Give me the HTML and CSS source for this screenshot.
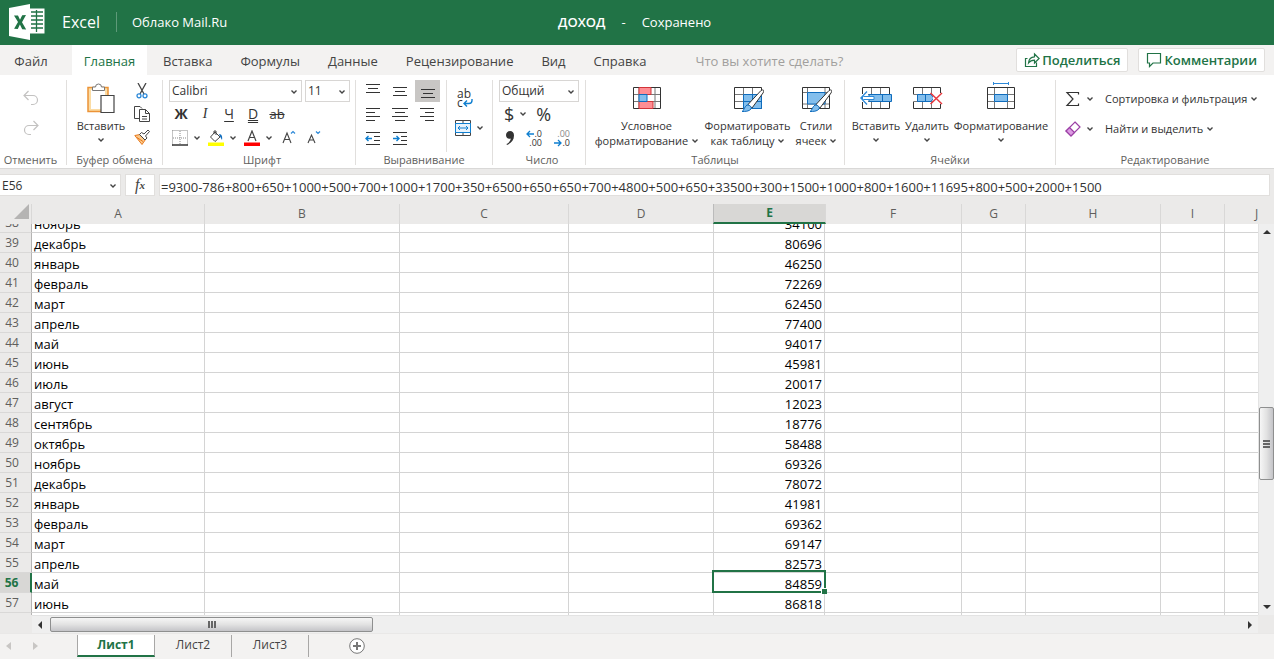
FILE: index.html
```html
<!DOCTYPE html>
<html lang="ru">
<head>
<meta charset="utf-8">
<title>ДОХОД - Excel</title>
<link rel="stylesheet" href="styles.css">
</head>
<body>
<svg class="defs" aria-hidden="true">
  <symbol id="chev" viewBox="0 0 6 4"><path d="M.5.6 3 3 5.500.6" fill="none" stroke="#444" stroke-width="1.4"/></symbol>
</svg>
<header class="titlebar">
  <svg class="logo" width="36" height="36" viewBox="0 0 36 36"><path d="M21 4.500h14.500v25H21z" fill="#fff"/><path d="M22 8h12M22 12h12M22 16h12M22 20h12M22 24h12M27.500 6v22" stroke="#217346" stroke-width="1.300"/><path d="M0 4 21 0v36L0 32z" fill="#fff"/><path d="m5 11.500 4 0 2 4.200 2.200-4.500 3.800-.2-4 7.200 4.200 7.300-4-.2-2.300-4.700-2.100 4.400-3.700-.2 3.900-6.700z" fill="#217346"/></svg>
  <span class="app">Excel</span>
  <span class="cloud">Облако Mail.Ru</span>
  <div class="doc"><span class="docname">ДОХОД</span><span>-</span><span>Сохранено</span></div>
</header>
<nav class="tabs">
  <button class="tab file">Файл</button>
  <button class="tab active">Главная</button>
  <button class="tab">Вставка</button>
  <button class="tab">Формулы</button>
  <button class="tab">Данные</button>
  <button class="tab">Рецензирование</button>
  <button class="tab">Вид</button>
  <button class="tab">Справка</button>
  <input class="tell" type="text" placeholder="Что вы хотите сделать?" aria-label="Что вы хотите сделать?">
  <button class="pill"><svg width="16" height="16" viewBox="0 0 16 16" fill="none" stroke="#217346" stroke-width="1.200"><path d="M3.500 6.500h-2v8h11v-4M4.500 11c.3-4 2.500-6 6-6.200V2l4.600 4.500L10.500 11V8.200C8 8.200 6 9 4.500 11z"/></svg>Поделиться</button>
  <button class="pill"><svg width="16" height="16" viewBox="0 0 16 16" fill="none" stroke="#217346" stroke-width="1.200"><path d="M1.500 1.500h13v9.500H7l-3.500 3.500V11h-2z"/></svg>Комментарии</button>
</nav>
<section class="ribbon">
  <div class="group g-undo">
    <div class="body column">
      <button class="ic" aria-label="Отменить"><svg width="16" height="16" viewBox="0 0 16 16" fill="none" stroke="#c3c2c1" stroke-width="1.200"><path d="M5.500 1 1 5.500 5.500 10M1 5.500h9a4.500 4.500 0 0 1 0 9H8"/></svg></button>
      <button class="ic" aria-label="Вернуть"><svg width="16" height="16" viewBox="0 0 16 16" fill="none" stroke="#c3c2c1" stroke-width="1.200"><path d="M10.500 1 15 5.500 10.500 10M15 5.500H6a4.500 4.500 0 0 0 0 9h2"/></svg></button>
    </div>
    <h2>Отменить</h2>
  </div>
  <div class="group g-clip">
    <div class="body row">
      <button class="big paste"><svg width="28" height="30" viewBox="0 0 28 30" fill="none"><path d="M1 4.500h20v24H1z" fill="#fbdca4" stroke="#ec9337" stroke-width="1.500"/><path d="M4 7h14v19H4z" fill="#fff"/><path d="M5.500 7.500V4h3a3 3 0 0 1 6 0h3v3.500z" fill="#fff" stroke="#777"/><path d="M14 12.500h13v17H14z" fill="#fff" stroke="#444" stroke-width="1.200"/></svg><span>Вставить</span><svg class="chev"><use href="#chev"/></svg></button>
      <div class="stack">
        <button class="ic" aria-label="Вырезать"><svg width="12" height="16" viewBox="0 0 12 16" fill="none"><path d="M2 0 8 11M10 0 4 11" stroke="#444" stroke-width="1.300"/><circle cx="3" cy="12.800" r="2" stroke="#2b88d8" stroke-width="1.300"/><circle cx="9" cy="12.800" r="2" stroke="#2b88d8" stroke-width="1.300"/></svg></button>
        <button class="ic" aria-label="Копировать"><svg width="16" height="16" viewBox="0 0 16 16" fill="#fff" stroke="#444"><path d="M6 12.500H.5V.5H6l2 2"/><path d="M5.500 3.500h6l4 4v8h-10zM11.500 3.500v4h4M8 10.500h5M8 13h5"/></svg></button>
        <button class="ic" aria-label="Формат по образцу"><svg width="16" height="16" viewBox="0 0 16 16"><path d="M.8 6.500 6 5.500l5.500 5L8 15.500z" fill="#fbc98b" stroke="#e8791d"/><path d="m3 8.500 6 4" stroke="#e8791d"/><path d="m5.500 5.500 2-2 2.500 1.500L14 1l1.500 1.500-4 4.500 1.500 2-2 2z" fill="#fff" stroke="#444"/></svg></button>
      </div>
    </div>
    <h2>Буфер обмена</h2>
  </div>
  <div class="group g-font">
    <div class="body">
      <div class="line top">
        <span class="sel face"><select aria-label="Шрифт"><option>Calibri</option></select><svg class="chev"><use href="#chev"/></svg></span>
        <span class="sel size"><select aria-label="Размер шрифта"><option>11</option></select><svg class="chev"><use href="#chev"/></svg></span>
      </div>
      <div class="line letters">
        <button class="b">Ж</button><button class="i">I</button><button class="u">Ч</button><button class="d">D</button><button class="s">ab</button>
      </div>
      <div class="line colors">
        <button class="drop" aria-label="Границы"><svg width="16" height="16" viewBox="0 0 16 16" fill="none"><path d="M.5.5h15v15M.5.5v15M8 1v14M1 8h14" stroke="#888" stroke-dasharray="1 1"/><path d="M0 15h16" stroke="#333" stroke-width="1.500"/></svg><svg class="chev"><use href="#chev"/></svg></button>
        <button class="drop" aria-label="Цвет заливки"><svg width="16" height="16" viewBox="0 0 16 16"><path d="M0 12.500h16V16H0z" fill="#ff0"/><path d="m7 2 5 5-5 4.500-4.500-4.500zM6 4V1h2v4" fill="none" stroke="#444"/><path d="M11 4c3 0 3.500 3 3 6l-2-3.500z" fill="#0f6cbd"/></svg><svg class="chev"><use href="#chev"/></svg></button>
        <button class="drop" aria-label="Цвет текста"><svg width="16" height="16" viewBox="0 0 16 16"><path d="M0 12.500h16V16H0z" fill="#f00"/><path d="m4 11 4-10 4 10M5.500 7.500h5" fill="none" stroke="#444" stroke-width="1.200"/></svg><svg class="chev"><use href="#chev"/></svg></button>
        <button class="ic" aria-label="Увеличить размер шрифта"><svg width="14" height="16" viewBox="0 0 14 16" fill="none"><path d="m1 13 4-10 4 10M2.500 9.500h5" stroke="#444" stroke-width="1.100"/><path d="m9 3.500 2-2 2 2" stroke="#2b88d8" stroke-width="1.200"/></svg></button>
        <button class="ic" aria-label="Уменьшить размер шрифта"><svg width="14" height="16" viewBox="0 0 14 16" fill="none"><path d="m1 13 3.500-8L8 13M2.300 10h4.500" stroke="#444" stroke-width="1.100"/><path d="m9 1.500 2 2 2-2" stroke="#2b88d8" stroke-width="1.200"/></svg></button>
      </div>
    </div>
    <h2>Шрифт</h2>
  </div>
  <div class="group g-align">
    <div class="body row">
      <div class="aligns">
        <button aria-label="По верхнему краю"><svg width="16" height="14" viewBox="0 0 16 14" stroke="#333"><path d="M1 .5h14M3 4.500h10M1 8.500h14"/></svg></button>
        <button aria-label="По середине"><svg width="16" height="14" viewBox="0 0 16 14" stroke="#333"><path d="M1 3.500h14M3 7.500h10M1 11.500h14"/></svg></button>
        <button class="on" aria-label="По нижнему краю"><svg width="16" height="14" viewBox="0 0 16 14" stroke="#333"><path d="M1 5.500h14M3 9.500h10M1 13.500h14"/></svg></button>
        <button aria-label="По левому краю"><svg width="16" height="14" viewBox="0 0 16 14" stroke="#333"><path d="M1 .5h14M1 4.500h9M1 8.500h14M1 12.500h9"/></svg></button>
        <button aria-label="По центру"><svg width="16" height="14" viewBox="0 0 16 14" stroke="#333"><path d="M0 .5h16M3 4.500h10M0 8.500h16M3 12.500h10"/></svg></button>
        <button aria-label="По правому краю"><svg width="16" height="14" viewBox="0 0 16 14" stroke="#333"><path d="M1 .5h14M6 4.500h9M1 8.500h14M6 12.500h9"/></svg></button>
        <button aria-label="Уменьшить отступ"><svg width="16" height="14" viewBox="0 0 16 14" fill="none" stroke="#333"><path d="M1 .5h14M9 4.500h6M9 8.500h6M1 12.500h14"/><path d="M1 6.500h6M3.500 4 1 6.500 3.500 9" stroke="#0f7fd0" stroke-width="1.400"/></svg></button>
        <button aria-label="Увеличить отступ"><svg width="16" height="14" viewBox="0 0 16 14" fill="none" stroke="#333"><path d="M1 .5h14M9 4.500h6M9 8.500h6M1 12.500h14"/><path d="M1 6.500h6M4.500 4 7 6.500 4.500 9" stroke="#0f7fd0" stroke-width="1.400"/></svg></button>
      </div>
      <div class="wraps">
        <button class="wrap" aria-label="Перенести текст"><span>ab</span><span>c<svg width="10" height="8" viewBox="0 0 10 8" fill="none" stroke="#0f7fd0" stroke-width="1.400"><path d="M9 0v1.500C9 3.500 8 4.500 6 4.500H1M4 1.500l-3 3 3 3"/></svg></span></button>
        <button class="drop" aria-label="Объединить"><svg width="16" height="16" viewBox="0 0 16 16" fill="none"><path d="M.5.500h15v15H.5zM8 1v3M8 12v3" stroke="#444"/><path d="M.5 3.500h15v9H.5z" fill="#e8f3fc" stroke="#0f7fd0"/><path d="M3 8h10M5 6 3 8l2 2M11 6l2 2-2 2" stroke="#0f7fd0"/></svg><svg class="chev"><use href="#chev"/></svg></button>
      </div>
    </div>
    <h2>Выравнивание</h2>
  </div>
  <div class="group g-num">
    <div class="body">
      <div class="line top"><span class="sel fmt"><select aria-label="Числовой формат"><option>Общий</option></select><svg class="chev"><use href="#chev"/></svg></span></div>
      <div class="line money"><button class="drop"><span>$</span><svg class="chev"><use href="#chev"/></svg></button><button>%</button></div>
      <div class="line decs">
        <button class="ic" aria-label="Разделитель"><svg width="8" height="14" viewBox="0 0 8 14"><path d="M4 0c2.500 0 4 1.700 4 4.500C8 9 5.500 12 1 14l-.5-1C3 11.500 4.500 10 4.800 7.500 2 8.500 0 6.500 0 4c0-2.300 1.800-4 4-4z" fill="#333"/></svg></button>
        <button class="dec"><span><svg width="8" height="8" viewBox="0 0 8 8" fill="none" stroke="#0f7fd0" stroke-width="1.300"><path d="M1 4h7M4 1 1 4l3 3"/></svg>.0</span><span>.00</span></button>
        <button class="dec less"><span>.00</span><span><svg width="8" height="8" viewBox="0 0 8 8" fill="none" stroke="#0f7fd0" stroke-width="1.300"><path d="M0 4h7M4 1l3 3-3 3"/></svg>.0</span></button>
      </div>
    </div>
    <h2>Число</h2>
  </div>
  <div class="group g-tables">
    <div class="body row">
      <button class="big cond"><svg width="32" height="28" viewBox="0 0 32 28"><path d="M2.500 3.500h27v21h-27z" fill="#fff" stroke="#333"/><path d="M3 10.500h26M3 17.500h26M8 4v20M24 4v20" stroke="#777"/><path d="M8 3.500h12v7H8zM8 17.500h14v7H8z" fill="#ff8e94" stroke="#d13438"/><path d="M8 10.500h8v7H8z" fill="#83beec" stroke="#0f6cbd"/></svg><span>Условное</span><span>форматирование <svg class="chev"><use href="#chev"/></svg></span></button>
      <button class="big astab"><svg width="32" height="28" viewBox="0 0 32 28"><path d="M2.500 3.500h27v21h-27z" fill="#fff" stroke="#333"/><path d="M3 10.500h26M3 17.500h26M11.500 4v20M20.500 4v20" stroke="#777"/><path d="M11.500 10.500h18v14h-18z" fill="#83beec" stroke="#0f6cbd"/><path d="M11.500 17.500h18M20.500 10.500v14" stroke="#0f6cbd"/><path d="m16 20.500 13-14c2.500-1.500 3.500 0 2 2.500L20 24z" fill="#fff" stroke="#333"/><path d="M10 27.500c2-.5 2-4.500 5-6.500 3 0 5 2 4 4-2 2.500-6 2.500-9 2.500z" fill="#83beec" stroke="#0f6cbd"/></svg><span>Форматировать</span><span>как таблицу <svg class="chev"><use href="#chev"/></svg></span></button>
      <button class="big styles"><svg width="32" height="28" viewBox="0 0 32 28"><path d="M2.500 3.500h27v21h-27z" fill="#fff" stroke="#333"/><path d="M3 8.500h26M3 20h26M7.500 4v20M25 4v20" stroke="#777"/><path d="M7.500 8.500H25V20H7.500z" fill="#83beec" stroke="#0f6cbd"/><path d="m16 20.500 13-14c2.500-1.500 3.500 0 2 2.500L20 24z" fill="#fff" stroke="#333"/><path d="M10 27.500c2-.5 2-4.500 5-6.500 3 0 5 2 4 4-2 2.500-6 2.500-9 2.500z" fill="#83beec" stroke="#0f6cbd"/></svg><span>Стили</span><span>ячеек <svg class="chev"><use href="#chev"/></svg></span></button>
    </div>
    <h2>Таблицы</h2>
  </div>
  <div class="group g-cells">
    <div class="body row">
      <button class="big ins"><svg width="32" height="28" viewBox="0 0 32 28"><path d="M2.500 3.500h27v21h-27z" fill="#fff" stroke="#333"/><path d="M3 10.500h26M3 17.500h26M11.500 4v20M20.500 4v20" stroke="#777"/><path d="M9 10.500h22.500v7H9z" fill="#83beec" stroke="#0f6cbd"/><path d="M22.500 10.500v7" stroke="#0f6cbd"/><path d="M0 10h8v8H0z" fill="#fff"/><path d="M7 7.500.8 14 7 20.500" fill="none" stroke="#2b88d8" stroke-width="1.300"/><path d="M14 12.500H3.500L2 14l1.500 1.500H14z" fill="#fff" stroke="#2b88d8"/></svg><span>Вставить</span><svg class="chev"><use href="#chev"/></svg></button>
      <button class="big del"><svg width="32" height="28" viewBox="0 0 32 28"><path d="M2.500 10.500v-7h27v21h-27v-7" fill="#fff" stroke="#333"/><path d="M3 10.500h26M3 17.500h26M11.500 4v20M20.500 4v20" stroke="#777"/><path d="M6.500 10.500H20l3 3.500-3 3.500H6.500z" fill="#83beec" stroke="#0f6cbd"/><path d="M14.500 10.500v7" stroke="#0f6cbd"/><path d="M22 9h9v11h-9z" fill="#fff"/><path d="m19.500 9 11.500 11M31 9 19.500 20" stroke="#e8393f" stroke-width="1.500"/></svg><span>Удалить</span><svg class="chev"><use href="#chev"/></svg></button>
      <button class="big form"><svg width="32" height="30" viewBox="0 -2 32 30"><path d="M2.500 3.500h27v21h-27z" fill="#fff" stroke="#333"/><path d="M3 10.500h26M3 17.500h26M9.500 4v20M22.500 4v20" stroke="#777"/><path d="M9.500 10.500h13v7h-13z" fill="#83beec" stroke="#0f6cbd"/><path d="M8.500-.5h15M8.500-2v3M23.500-2v3" stroke="#2b88d8"/></svg><span>Форматирование</span><svg class="chev"><use href="#chev"/></svg></button>
    </div>
    <h2>Ячейки</h2>
  </div>
  <div class="group g-edit">
    <div class="body edits">
      <button class="drop" aria-label="Автосумма"><svg width="16" height="16" viewBox="0 0 16 16" fill="none" stroke="#333" stroke-width="1.200"><path d="M13.500 3.500V1.500H2l6 6.500-6 6.500h11.500v-2"/></svg><svg class="chev"><use href="#chev"/></svg></button>
      <button class="txt">Сортировка и фильтрация<svg class="chev"><use href="#chev"/></svg></button>
      <button class="drop" aria-label="Очистить"><svg width="16" height="16" viewBox="0 0 16 16"><path d="m10 1 5 5-9 9-5-5z" fill="#fff" stroke="#9b3fa5" stroke-width="1.200"/><path d="m4.500 6.500 5 5L6 15l-5-5z" fill="#dd9be3" stroke="#9b3fa5" stroke-width="1.200"/></svg><svg class="chev"><use href="#chev"/></svg></button>
      <button class="txt">Найти и выделить<svg class="chev"><use href="#chev"/></svg></button>
    </div>
    <h2>Редактирование</h2>
  </div>
</section>
<section class="fbar">
  <span class="sel name"><select aria-label="Поле имени"><option>E56</option></select><svg class="chev"><use href="#chev"/></svg></span>
  <button class="fx"><i>f</i><sub>x</sub></button>
  <input class="formula" type="text" aria-label="Строка формул" value="=9300-786+800+650+1000+500+700+1000+1700+350+6500+650+650+700+4800+500+650+33500+300+1500+1000+800+1600+11695+800+500+2000+1500">
</section>
<main class="sheet">
  <div class="heads">
    <div class="corner"><svg width="15" height="15" viewBox="0 0 15 15"><path d="M15 0v15H0z" fill="#b5b4b3"/></svg></div>
    <div>A</div><div>B</div><div>C</div><div>D</div><div class="cur">E</div><div>F</div><div>G</div><div>H</div><div>I</div><div>J</div>
  </div>
  <div class="view">
    <table class="cells">
      <colgroup><col class="c0"><col class="ca"><col class="cb"><col class="cc"><col class="cd"><col class="ce"><col class="cf"><col class="cg"><col class="ch"><col class="ci"><col class="cj"></colgroup>
      <tbody>
      <tr><th>38</th><td>ноябрь</td><td></td><td></td><td></td><td>34100</td><td></td><td></td><td></td><td></td><td></td></tr>
      <tr><th>39</th><td>декабрь</td><td></td><td></td><td></td><td>80696</td><td></td><td></td><td></td><td></td><td></td></tr>
      <tr><th>40</th><td>январь</td><td></td><td></td><td></td><td>46250</td><td></td><td></td><td></td><td></td><td></td></tr>
      <tr><th>41</th><td>февраль</td><td></td><td></td><td></td><td>72269</td><td></td><td></td><td></td><td></td><td></td></tr>
      <tr><th>42</th><td>март</td><td></td><td></td><td></td><td>62450</td><td></td><td></td><td></td><td></td><td></td></tr>
      <tr><th>43</th><td>апрель</td><td></td><td></td><td></td><td>77400</td><td></td><td></td><td></td><td></td><td></td></tr>
      <tr><th>44</th><td>май</td><td></td><td></td><td></td><td>94017</td><td></td><td></td><td></td><td></td><td></td></tr>
      <tr><th>45</th><td>июнь</td><td></td><td></td><td></td><td>45981</td><td></td><td></td><td></td><td></td><td></td></tr>
      <tr><th>46</th><td>июль</td><td></td><td></td><td></td><td>20017</td><td></td><td></td><td></td><td></td><td></td></tr>
      <tr><th>47</th><td>август</td><td></td><td></td><td></td><td>12023</td><td></td><td></td><td></td><td></td><td></td></tr>
      <tr><th>48</th><td>сентябрь</td><td></td><td></td><td></td><td>18776</td><td></td><td></td><td></td><td></td><td></td></tr>
      <tr><th>49</th><td>октябрь</td><td></td><td></td><td></td><td>58488</td><td></td><td></td><td></td><td></td><td></td></tr>
      <tr><th>50</th><td>ноябрь</td><td></td><td></td><td></td><td>69326</td><td></td><td></td><td></td><td></td><td></td></tr>
      <tr><th>51</th><td>декабрь</td><td></td><td></td><td></td><td>78072</td><td></td><td></td><td></td><td></td><td></td></tr>
      <tr><th>52</th><td>январь</td><td></td><td></td><td></td><td>41981</td><td></td><td></td><td></td><td></td><td></td></tr>
      <tr><th>53</th><td>февраль</td><td></td><td></td><td></td><td>69362</td><td></td><td></td><td></td><td></td><td></td></tr>
      <tr><th>54</th><td>март</td><td></td><td></td><td></td><td>69147</td><td></td><td></td><td></td><td></td><td></td></tr>
      <tr><th>55</th><td>апрель</td><td></td><td></td><td></td><td>82573</td><td></td><td></td><td></td><td></td><td></td></tr>
      <tr class="currow"><th>56</th><td>май</td><td></td><td></td><td></td><td class="picked">84859</td><td></td><td></td><td></td><td></td><td></td></tr>
      <tr><th>57</th><td>июнь</td><td></td><td></td><td></td><td>86818</td><td></td><td></td><td></td><td></td><td></td></tr>
      <tr><th></th><td></td><td></td><td></td><td></td><td></td><td></td><td></td><td></td><td></td><td></td></tr>
      </tbody>
    </table>
  </div>
  <div class="vbar"><svg width="8" height="4" viewBox="0 0 8 4"><path d="M0 4 4 0l4 4z" fill="#333"/></svg><div class="vthumb"><i></i><i></i><i></i></div><svg width="8" height="4" viewBox="0 0 8 4"><path d="m0 0 4 4 4-4z" fill="#333"/></svg></div>
  <div class="hbar"><svg width="4" height="8" viewBox="0 0 4 8"><path d="M4 0 0 4l4 4z" fill="#333"/></svg><div class="hthumb"><i></i><i></i><i></i></div><svg width="4" height="8" viewBox="0 0 4 8"><path d="m0 0 4 4-4 4z" fill="#333"/></svg></div>
</main>
<footer class="sheets">
  <div class="arrows"><svg width="5" height="8" viewBox="0 0 5 8"><path d="M5 0 0 4l5 4z" fill="#c8c6c4"/></svg><svg width="5" height="8" viewBox="0 0 5 8"><path d="m0 0 5 4-5 4z" fill="#c8c6c4"/></svg></div>
  <button class="st on">Лист1</button><button class="st">Лист2</button><button class="st">Лист3</button>
  <button class="add" aria-label="Новый лист"><svg width="16" height="16" viewBox="0 0 16 16" fill="#fff" stroke="#777"><circle cx="8" cy="8" r="7.300"/><path d="M8 4v8M4 8h8" stroke-width="2"/></svg></button>
</footer>
</body>
</html>
```

FILE: styles.css
```css
* { box-sizing: border-box; }
body { margin: 0; height: 100vh; display: flex; flex-direction: column; overflow: hidden; background: #f3f2f1; color: #333; font: 12px/16px "Open Sans", "Noto Sans", sans-serif; }
button, select, input { font: inherit; color: inherit; margin: 0; padding: 0; border: 0; background: none; border-radius: 0; }
button { display: flex; align-items: center; justify-content: center; }
svg { display: block; flex: none; }
.defs { display: none; }
.chev { width: 6px; height: 4px; }

.titlebar { display: flex; align-items: center; height: 45px; flex: none; padding: 0 0 2px 9px; background: #217346; color: #fff; }
.app { margin-left: 17px; padding-right: 16px; border-right: 1px solid #5e9a79; font-size: 16px; line-height: 20px; }
.cloud { margin-left: 15px; font-size: 13px; }
.doc { flex: 1; display: flex; gap: 16px; justify-content: center; padding-right: 232px; font-size: 13px; }
.docname { font-weight: 600; }

.tabs { display: flex; align-items: stretch; height: 30px; flex: none; padding-right: 9px; background: #f3f2f1; color: #444; font-size: 13px; }
.tab { padding: 1px 14px 0; }
.tab.file { width: 72px; padding: 1px 10px 0 0; }
.tab.active { width: 75px; padding: 1px 0 0; margin-right: 2px; background: #fff; color: #217346; }
.tell { flex: 1; min-width: 0; margin-left: 35px; padding-top: 1px; }
.tell::placeholder { color: #a19f9d; opacity: 1; }
.pill { height: 24px; margin: 3px 0 0 10px; padding: 0 7px; gap: 2px; border: 1px solid #e1dfdd; border-radius: 2px; background: #fff; color: #217346; font-weight: 600; }

.ribbon { display: flex; height: 94px; flex: none; background: #fff; border-bottom: 1px solid #d9d8d7; }
.group { display: flex; flex-direction: column; border-right: 1px solid #e1dfdd; margin: 5px 0 3px; flex: none; }
.group h2 { margin: 0; font-size: 11px; line-height: 16px; font-weight: 400; color: #605e5c; text-align: center; white-space: nowrap; }
.body { height: 72px; flex: none; }
.row { display: flex; }
.column { display: flex; flex-direction: column; align-items: center; gap: 14px; padding-top: 10px; }
.line { display: flex; align-items: center; height: 24px; }
.line.top { height: 22px; gap: 3px; }
.g-undo { width: 67px; }
.g-undo .column { padding-right: 5px; }
.g-undo h2 { padding-right: 5px; }
.g-clip { width: 96px; }
.g-clip .row { padding-left: 8px; gap: 7px; }
.big { flex-direction: column; justify-content: flex-start; font-size: 11px; line-height: 15px; white-space: nowrap; }
.big > svg:first-child { margin: 4px 0 6px; }
.big > span { display: flex; align-items: center; gap: 4px; }
.big > .chev { margin-top: 5px; }
.paste { width: 52px; }
.paste > svg:first-child { margin: 3px 0 5px; }
.form > svg:first-child { margin: 2px 0 6px; }
.stack { display: flex; flex-direction: column; align-items: center; width: 16px; padding-top: 3px; gap: 7px; }
.g-font { width: 193px; padding-left: 6px; }
.sel { position: relative; display: block; height: 22px; border: 1px solid #d8d6d4; background: #fff; }
.sel select { appearance: none; width: 100%; height: 100%; padding-left: 2px; font-size: 12px; outline: 0; }
.sel .chev { position: absolute; right: 4px; top: 9px; pointer-events: none; }
.face { width: 133px; } .size { width: 45px; } .fmt { width: 80px; }
.letters button { width: 24px; font-size: 14px; }
.letters .b { font-weight: 700; }
.letters .i { font-family: "Liberation Serif", serif; font-style: italic; }
.letters .u { text-decoration: underline; text-underline-offset: 2px; }
.letters .d { text-decoration: underline double; text-underline-offset: 1px; }
.letters .s { text-decoration: line-through; font-size: 13px; }
.drop { gap: 6px; }
.colors { gap: 8px; padding-left: 3px; }
.colors .ic { width: 17px; }
.g-align { width: 137px; }
.aligns { display: grid; grid-template-columns: repeat(3, 27px); grid-auto-rows: 24px; width: 91px; padding-left: 3px; border-right: 1px solid #e1dfdd; }
.aligns button { padding-bottom: 2px; }
.aligns .on { width: 25px; height: 22px; padding: 0; justify-self: end; background: #c8c6c4; }
.wraps { display: flex; flex-direction: column; gap: 13px; padding: 9px 0 0 8px; }
.wrap { flex-direction: column; align-items: flex-start; line-height: 9px; font-size: 12px; padding-left: 2px; align-self: flex-start; }
.wrap span { display: flex; align-items: center; }
.g-num { width: 93px; padding-left: 6px; }
.money { gap: 10px; font-size: 18px; padding-left: 5px; }
.decs { gap: 11px; padding-left: 7px; }
.dec { flex-direction: column; align-items: flex-end; width: 17px; font-size: 9px; line-height: 9px; }
.dec span { display: flex; align-items: center; }
.less > span:first-child { color: #888; }
.g-tables { width: 259px; }
.cond { width: 121px; } .astab { width: 81px; } .styles { width: 56px; }
.g-cells { width: 211px; }
.g-cells .row { padding-left: 5px; }
.ins { width: 52px; } .del { width: 50px; } .form { width: 98px; }
.g-edit { flex: 1; border-right: 0; }
.edits { display: grid; grid-template-columns: 40px 1fr; grid-auto-rows: 30px; padding: 4px 0 0 9px; justify-items: start; }
.txt { gap: 4px; white-space: nowrap; font-size: 11px; }

.fbar { display: flex; gap: 4px; height: 35px; flex: none; padding: 5px 4px 8px 0; background: #ebeae9; }
.fbar > * { border: 1px solid #e1dfdd; background: #fff; height: 22px; }
.name { width: 121px; border-left: 0; }
.name select { padding: 2px 0 0 2px; }
.fx { width: 30px; color: #444; font-family: "Liberation Serif", serif; font-size: 16px; }
.fx sub { font-size: 11px; font-style: italic; font-weight: 700; }
.formula { flex: 1; min-width: 0; padding: 4px 0 0 1px; font-size: 13px; }

.sheet { flex: 1; min-height: 0; display: grid; grid-template-columns: 1fr 16px; grid-template-rows: 20px 1fr 18px; background: #ebeae9; }
.heads { grid-column: 1 / 3; display: grid; grid-template-columns: 32px 173px 195px 169px 145px 111px 137px 64px 135px 64px 64px; grid-template-rows: 20px; overflow: hidden; margin-right: 16px; font-size: 12px; line-height: 19px; color: #605e5c; text-align: center; }
.heads > div { border-right: 1px solid #d9d8d7; }
.heads .corner { display: flex; align-items: flex-start; justify-content: flex-end; padding-right: 2px; }
.heads .cur { margin: 0 -1px 0 -1px; line-height: 18px; background: #d8d7d5; border-left: 1px solid #bbb; border-bottom: 2px solid #217346; color: #217346; font-weight: 700; }
.view { overflow: hidden; background: #fff; }
.cells { width: 1289px; margin-top: -11px; table-layout: fixed; border-collapse: separate; border-spacing: 0; font-size: 13px; line-height: 16px; color: #000; }
.c0 { width: 32px; } .ca { width: 173px; } .cb { width: 195px; } .cc { width: 169px; } .cd { width: 145px; } .ce { width: 111px; } .cf { width: 137px; } .cg { width: 64px; } .ch { width: 135px; } .ci { width: 64px; } .cj { width: 64px; }
.cells td { height: 20px; padding: 3px 2px 0; border-right: 1px solid #d4d4d4; border-bottom: 1px solid #d4d4d4; }
.cells td:nth-child(6) { text-align: right; }
.cells th { padding: 0 7px 0 0; background: #ebeae9; border-right: 1px solid #b5b4b3; border-bottom: 1px solid #d9d8d7; font-size: 12px; font-weight: 400; color: #605e5c; }
.cells .currow th { background: #d8d7d5; color: #217346; font-weight: 700; border-right: 2px solid #217346; }
.cells .picked { position: relative; }
.picked::before { content: ""; position: absolute; inset: -3px -2px -1px -2px; border: 2px solid #217346; }
.picked::after { content: ""; position: absolute; right: -3px; bottom: -2px; width: 5px; height: 5px; background: #217346; border: solid #fff; border-width: 1px 0 0 1px; }
.vbar { display: flex; flex-direction: column; align-items: center; background: #efefef; border-left: 1px solid #e3e3e3; padding: 6px 0; }
.vthumb { width: 15px; height: 73px; margin: 173px 0 auto; border: 1px solid #8e8f8f; border-radius: 2px; background: linear-gradient(90deg, #f6f6f6, #e2e2e2 50%, #c4c4c8); display: flex; flex-direction: column; align-items: center; justify-content: center; gap: 1px; }
.vthumb i { width: 7px; height: 2px; background: #666; }
.hbar { margin-left: 32px; display: flex; align-items: center; background: #efefef; border-top: 1px solid #e3e3e3; padding: 0 6px; }
.hthumb { width: 323px; height: 15px; margin: 0 auto 0 8px; border: 1px solid #8e8f8f; border-radius: 2px; background: linear-gradient(#f6f6f6, #e2e2e2 50%, #c4c4c8); display: flex; align-items: center; justify-content: center; gap: 1px; }
.hthumb i { width: 2px; height: 7px; background: #666; }

.sheets { display: flex; height: 26px; flex: none; background: #f3f2f1; border-top: 1px solid #e9e8e7; padding: 1px 0 2px; font-size: 12px; color: #444; }
.arrows { display: flex; align-items: center; gap: 22px; width: 77px; padding-left: 6px; }
.st { width: 77px; padding-bottom: 2px; border-right: 1px solid #a8a7a6; }
.st.on { width: 78px; padding: 0; background: #fff; border-left: 1px solid #a8a7a6; border-bottom: 2px solid #217346; color: #217346; font-weight: 700; }
.add { margin-left: 40px; }
```
